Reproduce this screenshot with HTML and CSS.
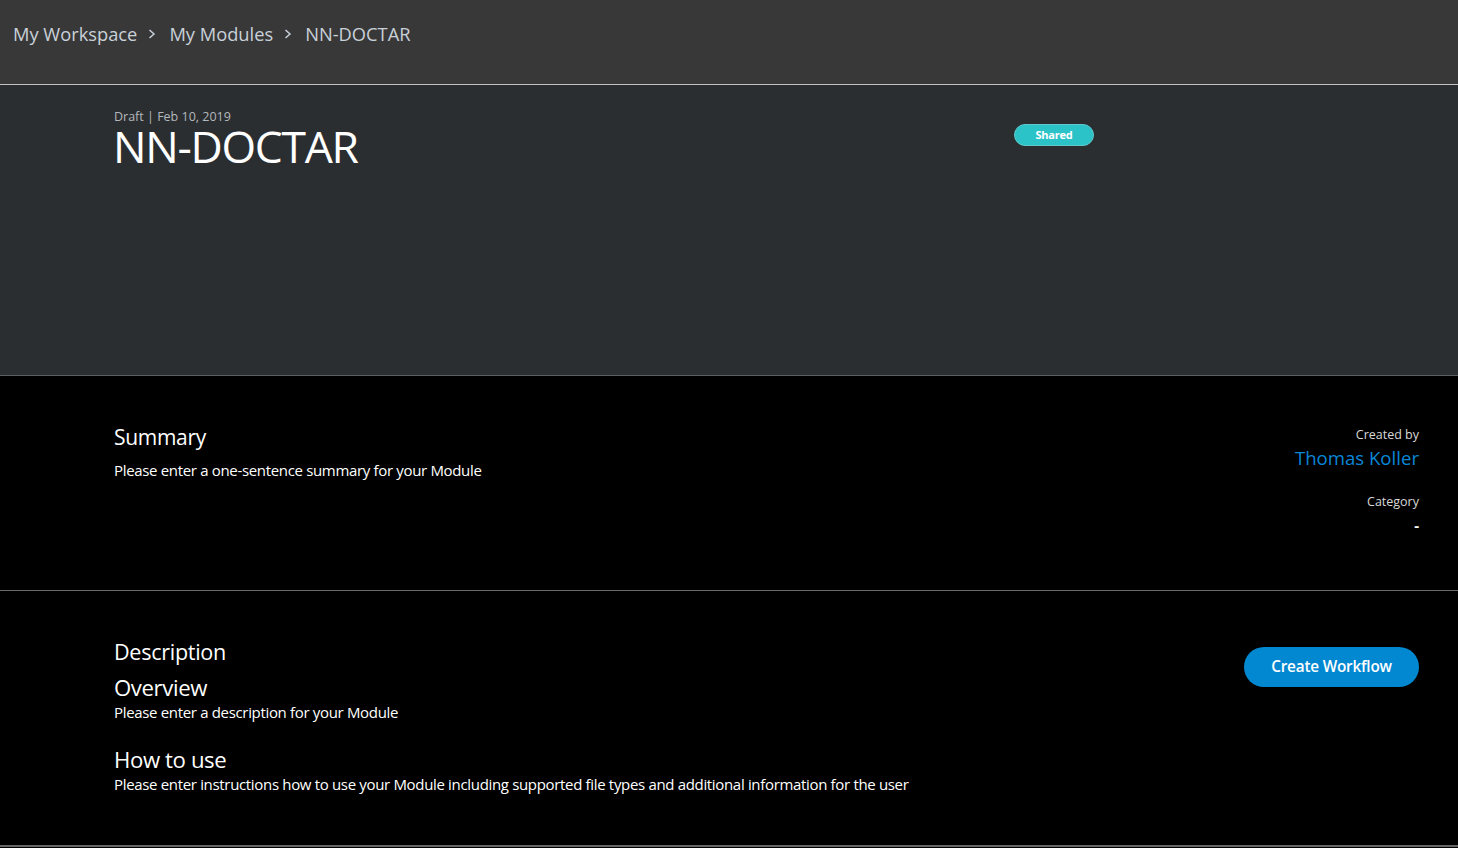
FILE: index.html
```html
<!DOCTYPE html>
<html>
<head>
<meta charset="utf-8">
<link rel="stylesheet" href="styles.css">
</head>
<body>
<header class="topbar">
  <nav class="crumbs">
    <span class="crumb">My Workspace</span>
    <svg class="chev" width="10" height="12" viewBox="0 0 10 12"><path d="M2.5 2 L7 6 L2.5 10" fill="none" stroke="currentColor" stroke-width="1.5"/></svg>
    <span class="crumb">My Modules</span>
    <svg class="chev" width="10" height="12" viewBox="0 0 10 12"><path d="M2.5 2 L7 6 L2.5 10" fill="none" stroke="currentColor" stroke-width="1.5"/></svg>
    <span class="crumb">NN-DOCTAR</span>
  </nav>
</header>
<section class="hero">
  <div class="hero-left">
    <div class="meta">Draft | Feb 10, 2019</div>
    <h1 class="title">NN-DOCTAR</h1>
  </div>
  <span class="badge">Shared</span>
</section>
<section class="summary">
  <div class="sum-left">
    <h2 class="h2">Summary</h2>
    <p class="txt">Please enter a one-sentence summary for your Module</p>
  </div>
  <div class="sum-right">
    <div class="label">Created by</div>
    <div class="author">Thomas Koller</div>
    <div class="label cat">Category</div>
    <div class="catval">-</div>
  </div>
</section>
<section class="desc">
  <div class="desc-left">
    <h2 class="h2 dh">Description</h2>
    <h3 class="h3">Overview</h3>
    <p class="txt">Please enter a description for your Module</p>
    <h3 class="h3 how">How to use</h3>
    <p class="txt">Please enter instructions how to use your Module including supported file types and additional information for the user</p>
  </div>
  <button class="btn">Create Workflow</button>
</section>
</body>
</html>
```
FILE: styles.css
```css
* { box-sizing: border-box; }
html, body { margin: 0; padding: 0; }
body {
  background: #000;
  font-family: "Open Sans", "Noto Sans", "Liberation Sans", sans-serif;
  color: #fff;
  width: 1458px;
  height: 848px;
  overflow: hidden;
}
.topbar {
  height: 85px;
  background: #383838;
  border-bottom: 1px solid #c4c4c4;
  display: flex;
  align-items: flex-start;
  padding: 20px 0 0 13px;
}
.crumbs {
  display: flex;
  align-items: center;
  gap: 10px;
  color: #c9d1d9;
  font-size: 18.3px;
  line-height: 28px;
}
.chev { color: #c9d1d9; margin: 0 2px 0 0; }
.hero {
  height: 291px;
  background: #2b2e31;
  border-bottom: 1px solid #5c5f62;
  display: flex;
  align-items: flex-start;
  padding: 24px 0 0 113px;
}
.hero-left { width: 901px; }
.meta {
  font-size: 12.5px;
  color: #b4b8bc;
  line-height: 16px;
  padding-left: 1px;
}
.title {
  margin: 0;
  font-weight: 400;
  font-size: 44.5px;
  line-height: 42px;
  letter-spacing: -1.3px;
  color: #fff;
}
.badge {
  margin-top: 15px;
  width: 80px;
  height: 22px;
  border-radius: 11px;
  background: #2cc3c8;
  border: 1px solid #5fc9cc;
  color: #fff;
  font-size: 11px;
  font-weight: 700;
  display: flex;
  align-items: center;
  justify-content: center;
  letter-spacing: -0.2px;
  padding-bottom: 1px;
}
.summary {
  height: 215px;
  border-bottom: 1px solid #6a6a6a;
  display: flex;
  justify-content: space-between;
  padding: 46px 39px 0 114px;
}
.h2 {
  margin: 0;
  font-weight: 400;
  font-size: 21px;
  line-height: 30px;
  letter-spacing: -0.3px;
}
.dh { font-size: 21.6px; }
.txt {
  margin: 0;
  font-size: 15px;
  line-height: 20px;
  letter-spacing: -0.33px;
}
.sum-left .txt { margin-top: 8px; }
.sum-right {
  text-align: right;
  display: flex;
  flex-direction: column;
  align-items: flex-end;
  padding-top: 4px;
}
.label {
  font-size: 12.5px;
  line-height: 18px;
  color: #d8d8d8;
}
.author {
  font-size: 18.6px;
  line-height: 26px;
  color: #0a86d8;
  margin-top: 1px;
}
.cat { margin-top: 22px; }
.catval {
  font-size: 15px;
  line-height: 24px;
  font-weight: 700;
  margin-top: 2px;
}
.desc {
  height: 256px;
  border-bottom: 2px solid #666;
  display: flex;
  justify-content: space-between;
  align-items: flex-start;
  padding: 46px 39px 0 114px;
}
.h3 {
  margin: 7px 0 0;
  font-weight: 400;
  font-size: 22.2px;
  line-height: 28px;
  letter-spacing: -0.4px;
}
.desc .txt { margin-top: 0; }
.how { margin-top: 24px; }
.btn {
  margin-top: 10px;
  width: 175px;
  height: 40px;
  border-radius: 20px;
  border: none;
  background: #0288d1;
  color: #fff;
  font-family: inherit;
  font-size: 15.3px;
  font-weight: 600;
  letter-spacing: -0.2px;
  padding: 0 0 3px;
}
```
